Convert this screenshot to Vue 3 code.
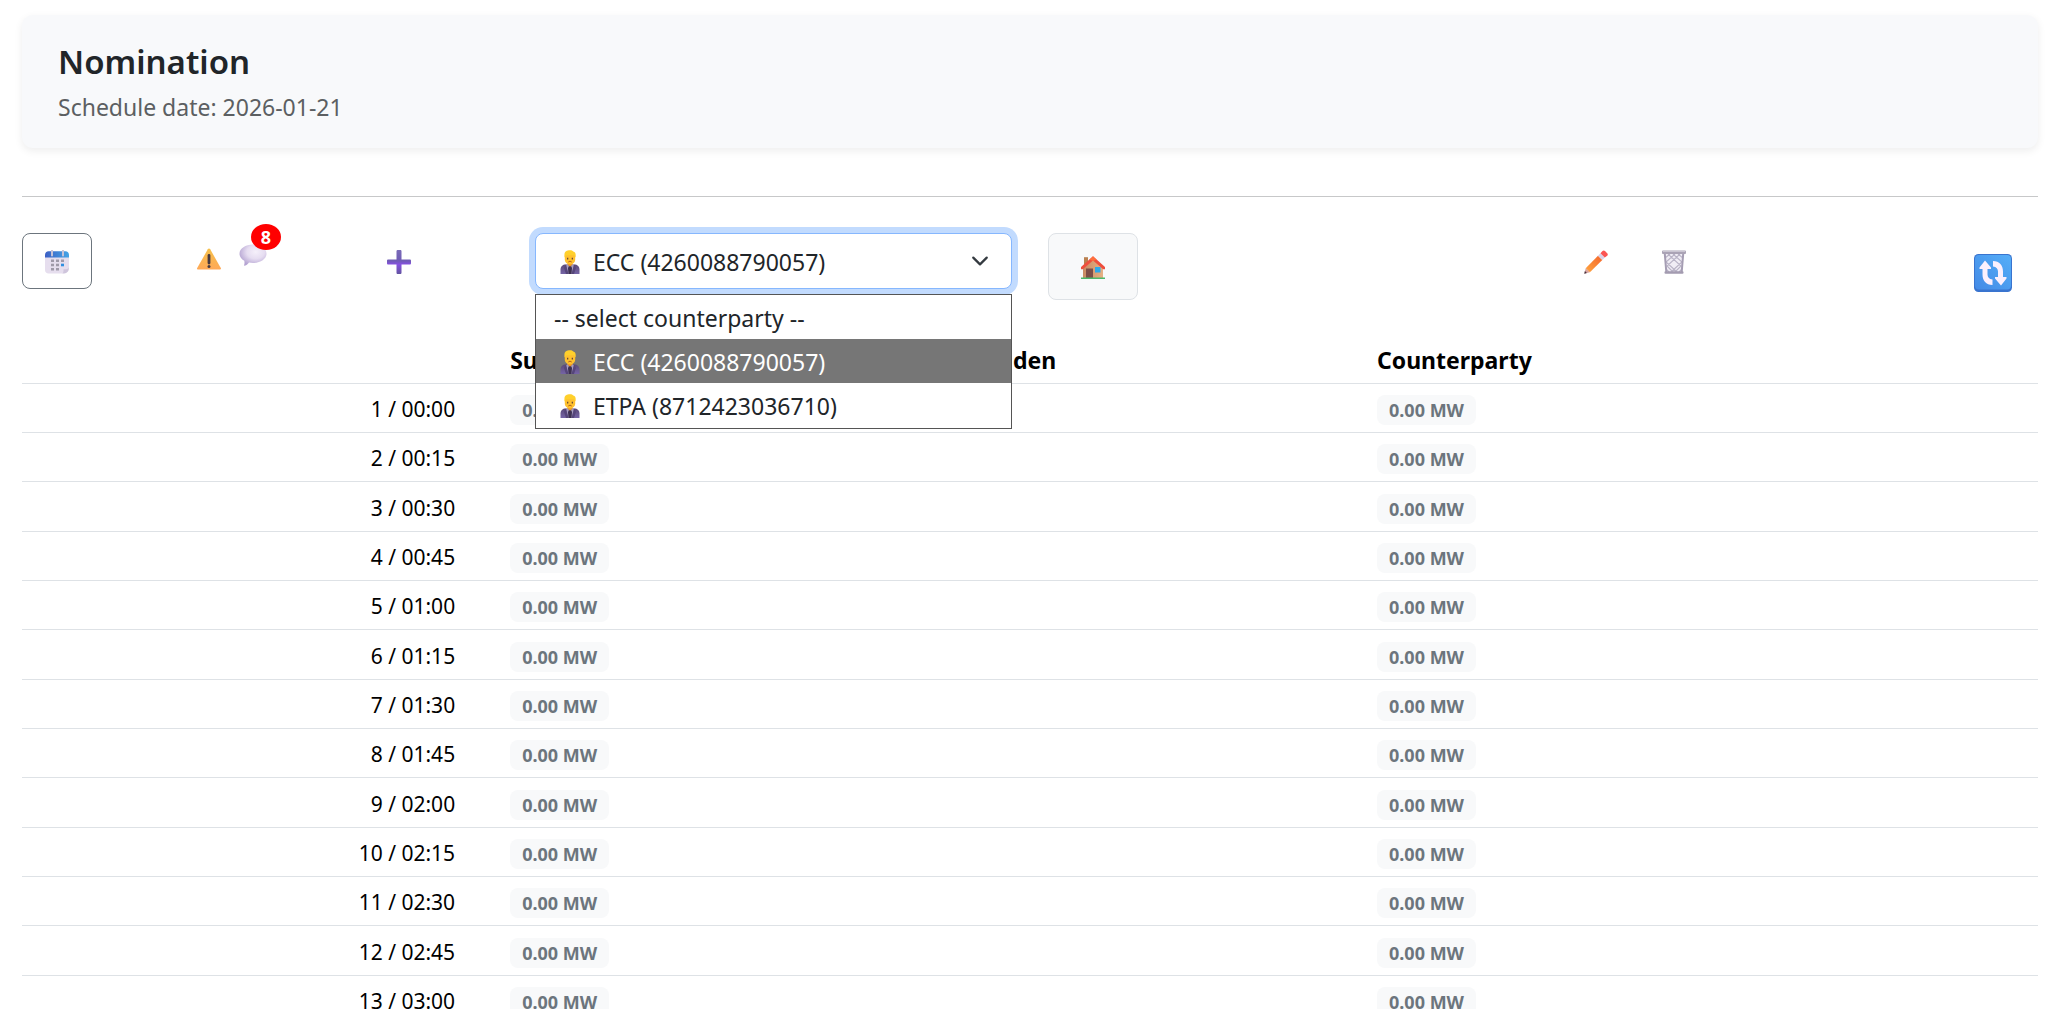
<script setup>
import { ref, computed } from "vue";

const scheduleDate = "2026-01-21";

const counterparties = [
  { id: "", label: "-- select counterparty --" },
  { id: "ecc", label: "ECC (4260088790057)" },
  { id: "etpa", label: "ETPA (8712423036710)" },
];

const selected = ref("ecc");
const menuOpen = ref(true);
const messages = ref(8);

const hasPerson = computed(() => selected.value !== "");

// one row per quarter of an hour
const rows = Array.from({ length: 13 }, (_, i) => {
  const hours = String(Math.floor(i / 4)).padStart(2, "0");
  const minutes = String((i % 4) * 15).padStart(2, "0");
  return { nr: i + 1, time: `${hours}:${minutes}`, own: 0, other: 0 };
});

function pick(id) {
  selected.value = id;
  menuOpen.value = false;
}

function formatMw(value) {
  return `${value.toFixed(2)} MW`;
}
</script>

<template>
  <div class="page">
    <svg class="defs" aria-hidden="true">
      <linearGradient id="suit" x1="0" y1="0" x2="0" y2="1">
        <stop offset="0" stop-color="#5b4a78" />
        <stop offset="1" stop-color="#7564a6" />
      </linearGradient>
      <symbol id="person" viewBox="0 0 20 24">
        <path d="M0.5 24v-4.5c0-3 2.2-5 5.2-5h8.600c3 0 5.200 2 5.200 5v4.500z" fill="url(#suit)" />
        <path d="M7.500 14l2.500 3 2.500-3 1.200 1.500L11.500 24h-3l-2.200-8.500z" fill="#a79dbf" />
        <path d="M9 16h2l1 2-.5 6h-3L8 18z" fill="#3e3152" />
        <path d="M5.600 14.500L8.500 24H6l-2-6zM14.400 14.500L11.500 24H14l2-6z" fill="#56467a" />
        <path d="M7.500 11h5v3.500L10 16.800 7.500 14.500z" fill="#f09a22" />
        <path d="M4.800 4.500h10.400v4.700c0 3.200-2.300 5-5.200 5s-5.200-1.800-5.200-5z" fill="#ffc12e" />
        <path d="M4.500 7.500V4.200C4.500 1.500 6.800 0.300 10 0.300c1.500 0 2.600.4 3.300 1.100 1.500.3 2.300 1.500 2.300 3.200v2.900l-1.600-2.300H6.500z" fill="#ffd02c" />
        <path d="M7 7.800h1.300v1.600H7zM11.700 7.800H13v1.600h-1.300z" fill="#6b4a35" />
        <path d="M8.300 12c.8-.9 2.600-.9 3.400 0" fill="none" stroke="#a9541c" stroke-width="0.9" />
      </symbol>
    </svg>

    <header class="card">
      <h1>Nomination</h1>
      <p>Schedule date: {{ scheduleDate }}</p>
    </header>

    <hr />

    <div class="toolbar">
      <div class="col-1">
        <button class="btn btn-outline" aria-label="Pick date">
          <svg viewBox="0 0 24 24">
            <defs>
              <linearGradient id="calTop">
                <stop offset="0" stop-color="#3d5fc4" />
                <stop offset="1" stop-color="#46a5e6" />
              </linearGradient>
            </defs>
            <path d="M0 6h24v12l-6 5.500H3.500C1.500 23.500 0 22 0 20z" fill="#e6deee" />
            <path d="M24 17.500c0 4-2 6-6.500 6 1-1 1-2 1-4.200 2.500.2 4 0 5.500-1.800z" fill="#cfc5dc" />
            <path d="M0 7.500V5c0-2.200 1.500-3.700 3.500-3.700h17C22.500 1.300 24 2.800 24 5v2.500z" fill="url(#calTop)" />
            <path d="M7 .5v5M18 .5v5" stroke="#c9c3d6" stroke-width="2" stroke-linecap="round" />
            <path d="M6 9.500h3V12H6zM11 9.500h3V12h-3zM16 9.500h3V12h-3zM6 13.700h3v2.600H6zM11 13.700h3v2.600h-3zM6 18h3v2.500H6zM11 18h3v2.500h-3z" fill="#a09aa9" />
            <path d="M16 13.700h3v2.600h-3z" fill="#2f8fe0" />
          </svg>
        </button>
      </div>

      <div class="col-1 alerts">
        <button class="btn-icon" aria-label="Warnings">
          <svg viewBox="0 0 24 24">
            <defs>
              <linearGradient id="warn" x1="0" y1="0" x2="0" y2="1">
                <stop offset="0" stop-color="#f6c04b" />
                <stop offset="1" stop-color="#ffa957" />
              </linearGradient>
            </defs>
            <path d="M12 1.500c.5 0 .9.300 1.200.8L23.800 21c.5 1 0 1.500-.9 1.500H1.100c-.9 0-1.400-.6-.9-1.500L10.800 2.300c.3-.5.700-.8 1.200-.8z" fill="url(#warn)" />
            <path d="M12 8.500v7.500" stroke="#45383f" stroke-width="2.800" stroke-linecap="round" />
            <circle cx="12" cy="19.600" r="1.500" fill="#45383f" />
          </svg>
        </button>
        <button class="btn-icon messages" aria-label="Messages">
          <svg viewBox="0 0 28 24">
            <defs>
              <radialGradient id="bubble" cx="0.6" cy="0.35" r="0.65">
                <stop offset="0" stop-color="#f5f0fa" />
                <stop offset="0.5" stop-color="#e6ddf1" />
                <stop offset="1" stop-color="#b5a4d2" />
              </radialGradient>
            </defs>
            <path d="M14 1.500c7.500 0 13.500 4 13.500 9.200S21.500 20 14 20c-1.500 0-2.800-.2-4-.5-1 1.500-2.500 2.700-4.200 3.200-.6.200-.9-.2-.7-.7.500-1.300.5-2.700.2-4.200C2.300 16 .5 13.500.5 10.700.5 5.500 6.500 1.500 14 1.500z" fill="url(#bubble)" />
          </svg>
          <span class="badge">{{ messages }}</span>
        </button>
      </div>

      <div class="col-1">
        <button class="btn" aria-label="Add nomination">
          <svg viewBox="0 0 24 24">
            <defs>
              <linearGradient id="plus" x1="0" y1="0" x2="0" y2="1">
                <stop offset="0" stop-color="#7a6bb8" />
                <stop offset="0.45" stop-color="#6f5bb5" />
                <stop offset="0.600" stop-color="#8650e0" />
                <stop offset="1" stop-color="#6254a0" />
              </linearGradient>
            </defs>
            <path d="M11.200 0h2c.8 0 1.300.5 1.300 1.300v8.200h8.200c.8 0 1.300.5 1.300 1.300v2.400c0 .8-.5 1.300-1.300 1.300h-8.200v8.200c0 .8-.5 1.300-1.300 1.300h-2.400c-.8 0-1.300-.5-1.300-1.300v-8.200H1.300C.5 14.500 0 14 0 13.200v-2.400c0-.8.5-1.300 1.300-1.300h8.200V1.300C9.500.5 10 0 11.200 0z" fill="url(#plus)" />
          </svg>
        </button>
      </div>

      <div class="col-3 picker">
        <select
          v-model="selected"
          class="select"
          :class="{ 'with-person': hasPerson, 'select-open': menuOpen }"
          aria-label="Counterparty"
          @mousedown.prevent="menuOpen = !menuOpen"
        >
          <option v-for="c in counterparties" :key="c.id" :value="c.id">{{ c.label }}</option>
        </select>
        <svg v-if="hasPerson" class="person select-person"><use href="#person" /></svg>
        <svg class="caret" viewBox="0 0 16 16">
          <path d="M2 5l6 6 6-6" fill="none" stroke="#343a40" stroke-width="2" stroke-linecap="round" stroke-linejoin="round" />
        </svg>
        <ul v-if="menuOpen" class="menu" role="listbox">
          <li
            v-for="c in counterparties"
            :key="c.id"
            role="option"
            :aria-selected="c.id === selected"
            :class="{ active: c.id === selected }"
            @click="pick(c.id)"
          >
            <svg v-if="c.id" class="person"><use href="#person" /></svg>
            <span>{{ c.label }}</span>
          </li>
        </ul>
      </div>

      <div class="col-3">
        <button class="btn btn-light" aria-label="Home">
          <svg viewBox="0 0 24 24">
            <defs>
              <linearGradient id="wall">
                <stop offset="0" stop-color="#c98a63" />
                <stop offset="1" stop-color="#e6b184" />
              </linearGradient>
            </defs>
            <path d="M3 1.200h4V9H3z" fill="#b98150" />
            <path d="M2 11.500L12 2l10 9.500V22H2z" fill="url(#wall)" />
            <path d="M12 .3L24 11v2.300h-1.800L12 4.500 1.800 13.300H0V11z" fill="#ee4f3d" />
            <path d="M12 .3l3.500 3.200L12 5 8.500 3.500z" fill="#ff6f3c" />
            <path d="M5 12.500h7V22H5z" fill="#7d4e47" />
            <path d="M14 11h5.500v5.500H14z" fill="#2ea8ea" />
            <path d="M0 21.500h24V23H0z" fill="#4cb86a" />
          </svg>
        </button>
      </div>

      <div class="col-1 edit">
        <button class="btn" aria-label="Edit">
          <svg viewBox="0 0 24 24">
            <defs>
              <linearGradient id="pencil" x1="0" y1="1" x2="1" y2="0">
                <stop offset="0" stop-color="#ffa63f" />
                <stop offset="1" stop-color="#f4652c" />
              </linearGradient>
            </defs>
            <path d="M.3 23.700l1.400-5.500 4.200 4.100z" fill="#d9a3a0" />
            <path d="M.3 23.700l.6-2.600 2 2z" fill="#40303c" />
            <path d="M1.700 18.200L14 5.800 18.300 10 5.900 22.300z" fill="url(#pencil)" />
            <path d="M14 5.800l2.500-2.500 4.300 4.200L18.300 10z" fill="#d9d0e6" />
            <path d="M16.500 3.300l2-2.200c.8-.8 1.700-.8 2.500 0l2.200 2.200c.8.8.8 1.700 0 2.500l-2.400 1.700z" fill="#fb5453" />
          </svg>
        </button>
        <button class="btn" aria-label="Delete">
          <svg viewBox="0 0 24 24">
            <path d="M2.500 4l1.500 18h16l1.500-18z" fill="#f0edf5" />
            <path d="M6 4l13 12-6 6M11 4l9 8-11 10M16 4l5 4M18 4L5 16l6 6M13 4l-9 8 11 10M8 4L3 8M4 19l3 3M20 19l-3 3" fill="none" stroke="#b9b3c6" stroke-width="1.100" />
            <path d="M2.800 4l1.500 18M21.200 4l-1.500 18" stroke="#a59db3" stroke-width="2" />
            <rect y="0.500" width="24" height="3.500" rx="1" fill="#aaa3b5" />
            <rect x="2.500" y="21.200" width="19" height="2.500" rx="1" fill="#a39bb0" />
            <path d="M1 1.500h22" stroke="#cac5d2" />
          </svg>
        </button>
      </div>

      <div class="col-1 sync">
        <button class="btn-icon" aria-label="Refresh">
          <svg class="large" viewBox="0 0 38 38">
            <defs>
              <linearGradient id="sync" x1="0" y1="1" x2="1" y2="0">
                <stop offset="0" stop-color="#438ae6" />
                <stop offset="1" stop-color="#55aef8" />
              </linearGradient>
            </defs>
            <rect width="38" height="38" rx="4.500" fill="#3974cf" />
            <rect x="1" y="1" width="36" height="34.500" rx="4" fill="url(#sync)" />
            <path d="M11 6.500l6 7v1.500h-3.500v5.500c0 2.700 1.500 4.500 5 5v5.500c-6.500-.2-10-4.200-10-10.500V15H5.500v-1.500z" fill="#fbf0fd" />
            <path d="M27 31.500l-6-7V23h3v-5.500c0-2.700-1.500-4.500-5-5V7c6.500.2 10 4.200 10 10.500V23h3.500v1.500z" fill="#fbf0fd" />
          </svg>
        </button>
      </div>
    </div>

    <table>
      <thead>
        <tr>
          <th class="time"></th>
          <th class="own">
            <div class="own-title"><span>Su</span><span>den</span></div>
          </th>
          <th class="other">Counterparty</th>
        </tr>
      </thead>
      <tbody>
        <tr v-for="row in rows" :key="row.nr">
          <td class="time">{{ row.nr }} / {{ row.time }}</td>
          <td><span class="value">{{ formatMw(row.own) }}</span></td>
          <td><span class="value">{{ formatMw(row.other) }}</span></td>
        </tr>
      </tbody>
    </table>
  </div>
</template>

<style>
body {
  margin: 0;
  background: #fff;
}
</style>

<style scoped>
.page {
  padding: 15px 21px 0 22px;
  font-family: "Segoe UI", "Noto Sans", "Open Sans", sans-serif;
  font-size: 23px;
  color: #212529;
}

.defs {
  position: absolute;
  width: 0;
  height: 0;
}

.card {
  background: #f8f9fb;
  border-radius: 11px;
  padding: 24px 36px;
  box-shadow: 0 3px 8px rgba(0, 0, 0, 0.07);
}

h1 {
  margin: 0 0 5px;
  font-size: 33px;
  font-weight: 600;
  line-height: 46px;
}

p {
  margin: 0;
  color: #5c5f62;
  line-height: 34px;
}

hr {
  margin: 48px 0 36px;
  border: 0;
  border-top: 1px solid #c7c8c9;
}

.toolbar {
  display: grid;
  grid-template-columns: repeat(12, minmax(0, 1fr));
  column-gap: 36px;
  align-items: start;
}

.col-1 {
  grid-column: span 1;
}

.col-3 {
  grid-column: span 3;
}

button {
  font: inherit;
  cursor: pointer;
}

button svg {
  display: block;
  width: 24px;
  height: 24px;
}

.btn {
  height: 56px;
  padding: 2px 22px 0;
  border: 1px solid transparent;
  border-radius: 8px;
  background: none;
}

.btn-outline {
  border-color: #6c757d;
}

.btn-light {
  height: 67px;
  padding: 2px 32px 0;
  border-color: #dee2e6;
  background: #f8f9fa;
}

.btn-icon {
  border: 0;
  padding: 0;
  background: none;
}

.alerts {
  display: flex;
  gap: 18px;
  padding: 14px 0 0 4px;
}

.messages {
  position: relative;
  height: 24px;
  margin-top: -4px;
}

.messages svg {
  width: 28px;
}

.badge {
  position: absolute;
  top: -19px;
  left: 12px;
  width: 30px;
  height: 26px;
  border-radius: 50%;
  background: #f00;
  color: #fff;
  font-size: 18px;
  font-weight: 700;
  line-height: 26px;
  text-align: center;
}

.picker {
  position: relative;
}

.select {
  display: block;
  width: 100%;
  height: 56px;
  padding: 2px 48px 0 18px;
  border: 1px solid #dee2e6;
  border-radius: 8px;
  appearance: none;
  background: #fff;
  color: #212529;
  font: inherit;
  outline: none;
}

.with-person {
  padding-left: 57px;
}

.select-open {
  border-color: #86b7fe;
  box-shadow: 0 0 0 6px #c2dbfe;
}

.person {
  width: 20px;
  height: 24px;
}

.select-person {
  position: absolute;
  top: 17px;
  left: 25px;
  pointer-events: none;
}

.caret {
  position: absolute;
  top: 19px;
  right: 23px;
  width: 18px;
  height: 18px;
  pointer-events: none;
}

.menu {
  position: absolute;
  top: 61px;
  left: 0;
  right: 0;
  z-index: 1;
  margin: 0;
  padding: 0 0 1px;
  list-style: none;
  background: #fff;
  border: 1px solid #555;
}

.menu li {
  display: flex;
  align-items: center;
  gap: 13px;
  box-sizing: border-box;
  height: 44px;
  padding: 2px 24px 0;
  cursor: pointer;
}

.menu li:first-child {
  padding: 2px 18px 0;
}

.menu .active {
  background: #767676;
  color: #fff;
}

.edit {
  display: flex;
  gap: 8px;
}

.sync {
  grid-column: 12;
  display: flex;
  justify-content: flex-end;
  padding: 21px 26px 0 0;
}

.large {
  width: 38px;
  height: 38px;
}

table {
  width: 100%;
  margin-top: 28px;
  table-layout: fixed;
  border-collapse: collapse;
  color: #000;
}

tr {
  height: 49px;
  border-bottom: 1px solid #dee2e6;
}

tbody tr:nth-child(3n) {
  height: 50px;
}

th,
td {
  box-sizing: border-box;
  padding: 3px 11px 0;
  text-align: left;
  line-height: 30px;
  white-space: nowrap;
}

.own {
  width: 43%;
}

.other {
  width: 33.333%;
}

.own-title {
  display: flex;
  justify-content: space-between;
  width: 546px;
}

td.time {
  padding-right: 44px;
  font-size: 21px;
  text-align: right;
}

.value {
  display: inline-block;
  padding: 0 12px;
  border-radius: 8px;
  background: #f8f9fa;
  color: #6c757d;
  font-size: 18px;
  font-weight: 700;
}
</style>
